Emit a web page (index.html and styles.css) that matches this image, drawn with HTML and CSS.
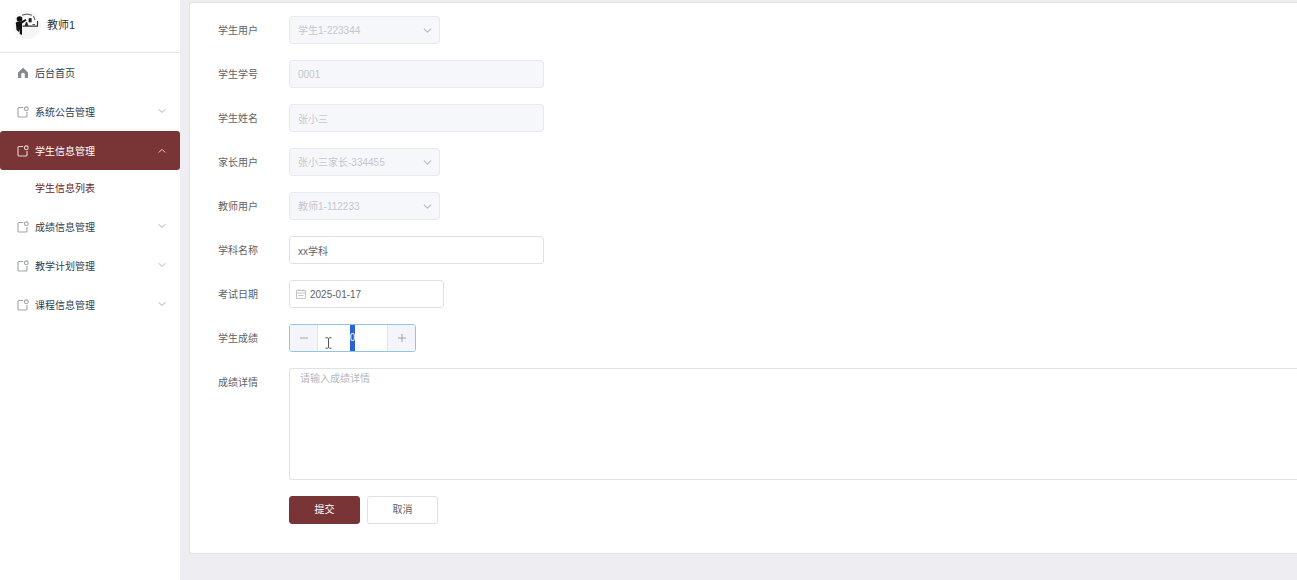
FILE: index.html
```html
<!DOCTYPE html>
<html lang="zh-CN">
<head>
<meta charset="utf-8">
<meta name="viewport" content="width=device-width, initial-scale=1">
<title>学生信息管理</title>
<link rel="stylesheet" href="styles.css">
</head>
<body>
<svg class="sprite" aria-hidden="true">
  <symbol id="note" viewBox="0 0 12 12"><path d="M6.200 1.500H2a1 1 0 0 0-1 1v7.500a1 1 0 0 0 1 1h7a1 1 0 0 0 1-1V6" fill="none" stroke="currentColor" stroke-width="1.100"/><circle cx="9.300" cy="2.800" r="1.900" fill="none" stroke="currentColor" stroke-width="1.100"/></symbol>
  <symbol id="down" viewBox="0 0 8 8"><path d="M.8 2.300 4 5.500l3.200-3.200" fill="none" stroke="currentColor"/></symbol>
  <symbol id="up" viewBox="0 0 8 8"><path d="M.8 5.500 4 2.300l3.200 3.200" fill="none" stroke="currentColor"/></symbol>
</svg>
<div class="layout">
  <aside class="sidebar">
    <header class="profile">
      <svg class="avatar" viewBox="0 0 26 26" role="img" aria-label="头像">
        <circle cx="13" cy="13" r="12.500" fill="#f5f5f5"/>
        <path d="M8 3.200Q13 .8 18 3.200" fill="none" stroke="#555"/>
        <path d="M9 4.500h14.500V14H9z" fill="#fff"/>
        <circle cx="5.500" cy="7" r="2.800" fill="#111"/>
        <path d="M1.800 10.500q2-1.500 5-1l5-2.500.7 1.400L8 11.500V23l-2.300-1v-5l-.7 3-2.500-2z" fill="#111"/>
        <path d="M8.500 14.200H24M23.500 9v5" stroke="#333" stroke-width="1.200" fill="none"/>
        <path d="M11 13.500l1.500-3.500 1.500 3.500zM15 6.500h2.200V10H15zM19.500 4l1.500 4M18.500 12.500h2.500" stroke="#222" fill="#222" stroke-width=".8"/>
      </svg>
      <span class="username">教师1</span>
    </header>
    <nav class="menu" aria-label="主菜单">
      <a class="item" href="#home"><svg class="icon home" viewBox="0 0 12 12"><path d="M6 .8 11 5.500V11H7.800V7.500a1.800 1.800 0 0 0-3.600 0V11H1V5.500z" fill="currentColor"/></svg><span>后台首页</span></a>
      <button class="item" type="button" aria-expanded="false"><svg class="icon"><use href="#note"/></svg><span>系统公告管理</span><svg class="arrow"><use href="#down"/></svg></button>
      <button class="item active" type="button" aria-expanded="true"><svg class="icon"><use href="#note"/></svg><span>学生信息管理</span><svg class="arrow"><use href="#up"/></svg></button>
      <a class="subitem" href="#students">学生信息列表</a>
      <button class="item" type="button" aria-expanded="false"><svg class="icon"><use href="#note"/></svg><span>成绩信息管理</span><svg class="arrow"><use href="#down"/></svg></button>
      <button class="item" type="button" aria-expanded="false"><svg class="icon"><use href="#note"/></svg><span>教学计划管理</span><svg class="arrow"><use href="#down"/></svg></button>
      <button class="item" type="button" aria-expanded="false"><svg class="icon"><use href="#note"/></svg><span>课程信息管理</span><svg class="arrow"><use href="#down"/></svg></button>
    </nav>
  </aside>
  <main class="main">
    <form class="card">
      <div class="row">
        <label for="student">学生用户</label>
        <div class="select"><select class="field" id="student" disabled><option>学生1-223344</option></select><svg class="caret"><use href="#down"/></svg></div>
      </div>
      <div class="row">
        <label for="number">学生学号</label>
        <input class="field wide" id="number" type="text" value="0001" disabled>
      </div>
      <div class="row">
        <label for="name">学生姓名</label>
        <input class="field wide" id="name" type="text" value="张小三" disabled>
      </div>
      <div class="row">
        <label for="parent">家长用户</label>
        <div class="select"><select class="field" id="parent" disabled><option>张小三家长-334455</option></select><svg class="caret"><use href="#down"/></svg></div>
      </div>
      <div class="row">
        <label for="teacher">教师用户</label>
        <div class="select"><select class="field" id="teacher" disabled><option>教师1-112233</option></select><svg class="caret"><use href="#down"/></svg></div>
      </div>
      <div class="row">
        <label for="subject">学科名称</label>
        <input class="field wide" id="subject" type="text" value="xx学科">
      </div>
      <div class="row">
        <label for="date">考试日期</label>
        <div class="date">
          <svg class="calendar" viewBox="0 0 10 10"><path d="M.5 1.500h9v8h-9zM.5 4h9M2.500 6.500h5M3 .3v2M7 .3v2" fill="none" stroke="currentColor" stroke-width=".8"/></svg>
          <input class="field" id="date" type="text" value="2025-01-17">
        </div>
      </div>
      <div class="row">
        <label for="score">学生成绩</label>
        <div class="stepper">
          <button type="button" aria-label="减少"><svg viewBox="0 0 8 8"><path d="M0 4h8" stroke="currentColor" stroke-width=".9"/></svg></button>
          <input id="score" type="text" inputmode="numeric" value="0">
          <button type="button" aria-label="增加"><svg viewBox="0 0 8 8"><path d="M0 4h8M4 0v8" stroke="currentColor" stroke-width=".9"/></svg></button>
          <svg class="pointer" viewBox="0 0 7 12" aria-hidden="true"><path d="M.5 .8H2.800L3.500 1.400 4.200 .8H6.500M3.500 1.400V10.600M.5 11.200H2.800L3.500 10.600 4.200 11.200H6.500" fill="none" stroke="#555"/></svg>
        </div>
      </div>
      <div class="row">
        <label for="detail">成绩详情</label>
        <textarea class="field detail" id="detail" placeholder="请输入成绩详情"></textarea>
      </div>
      <div class="actions">
        <button class="button primary" type="submit">提交</button>
        <button class="button" type="button">取消</button>
      </div>
    </form>
  </main>
</div>
<script src="script.js"></script>
</body>
</html>
```

FILE: styles.css
```css
* { box-sizing: border-box; }
body {
  margin: 0;
  background: #ededf2;
  color: #606266;
  font: 10px/16px "Liberation Sans", "Noto Sans CJK SC", sans-serif;
}
button, input, select, textarea { font: inherit; color: inherit; }
button { cursor: pointer; }
.sprite { display: none; }
.layout { display: flex; min-height: 100vh; }

.sidebar { flex: 0 0 180px; background: #fff; }
.profile {
  display: flex;
  align-items: center;
  gap: 7px;
  height: 53px;
  padding: 0 14px 2px;
  border-bottom: 1px solid #e6e6e6;
}
.avatar { width: 26px; height: 26px; border-radius: 50%; box-shadow: 0 0 2px #ddd; }
.username { font-size: 11px; color: #303133; }
.menu { display: flex; flex-direction: column; }
.item {
  display: flex;
  align-items: center;
  gap: 6px;
  height: 39px;
  padding: 2px 14px 0 17px;
  border: 0;
  border-radius: 3px;
  background: none;
  color: #2f3d4f;
  text-align: left;
  text-decoration: none;
}
.icon { width: 12px; height: 12px; margin-bottom: 1px; color: #a0a4aa; }
.home { color: #858990; }
.arrow { width: 8px; height: 8px; margin: 0 0 4px auto; color: #a5a8ad; }
.active { background: #793535; color: #fff; }
.active .icon, .active .arrow { color: #e3d3d3; }
.active .arrow { margin-bottom: 2px; }
.subitem {
  height: 37px;
  padding-left: 35px;
  color: #6b2424;
  line-height: 38px;
  text-decoration: none;
}

.main { flex: 1; min-width: 0; padding: 2px 0 26px 9px; }
.card {
  display: flex;
  flex-direction: column;
  gap: 16px;
  padding: 13px 0 29px 28px;
  border: 1px solid #e2e2e8;
  border-right: 0;
  border-radius: 3px 0 0 3px;
  background: #fff;
}
.row { display: flex; align-items: flex-start; }
.row > label { flex: 0 0 71px; height: 28px; line-height: 30px; }
.field {
  width: 100%;
  height: 28px;
  padding: 0 8px;
  border: 1px solid #dfe1e6;
  border-radius: 3px;
  background: #fff;
  outline: 0;
}
.field:disabled { background: #f6f7fa; border-color: #e8eaef; color: #c4c7ce; opacity: 1; }
.wide { width: 255px; }
.select { position: relative; width: 151px; }
.select .field { display: block; padding-top: 2px; appearance: none; }
.caret { position: absolute; top: 10px; right: 8px; width: 9px; height: 9px; color: #b8bcc4; pointer-events: none; }
.date { position: relative; width: 155px; }
.date .field { display: block; padding-left: 20px; }
.calendar { position: absolute; top: 9px; left: 7px; width: 10px; height: 10px; color: #b4b8be; }
.stepper {
  position: relative;
  display: flex;
  width: 127px;
  height: 28px;
  overflow: hidden;
  border: 1px solid #8fc5e3;
  border-radius: 3px;
}
.stepper button {
  display: grid;
  place-items: center;
  flex: 0 0 28px;
  padding: 0;
  border: 0;
  background: #f4f5fa;
  color: #96999e;
}
.stepper button:first-child { border-right: 1px solid #e2e4ea; }
.stepper button:nth-of-type(2) { border-left: 1px solid #e2e4ea; }
.stepper button svg { width: 8px; height: 8px; }
.stepper input {
  flex: 1;
  min-width: 0;
  padding: 0;
  border: 0;
  outline: 0;
  line-height: 26px;
  text-align: center;
}
.stepper input::selection { background: #2b63d3; color: #fff; }
.pointer { position: absolute; top: 12px; left: 35px; width: 7px; height: 12px; pointer-events: none; }
.detail {
  display: block;
  height: 112px;
  padding: 2px 10px;
  border-right: 0;
  border-radius: 3px 0 0 3px;
  resize: none;
}
.detail::placeholder { color: #b4b7bd; opacity: 1; }
.actions { display: flex; gap: 7px; padding-left: 71px; }
.button {
  width: 71px;
  height: 28px;
  padding: 0;
  border: 1px solid #dfe1e6;
  border-radius: 3px;
  background: #fff;
}
.primary { border-color: #793535; background: #793535; color: #fff; }
```

FILE: script.js
```js
const score = document.getElementById("score");
score.focus();
score.select();
```
